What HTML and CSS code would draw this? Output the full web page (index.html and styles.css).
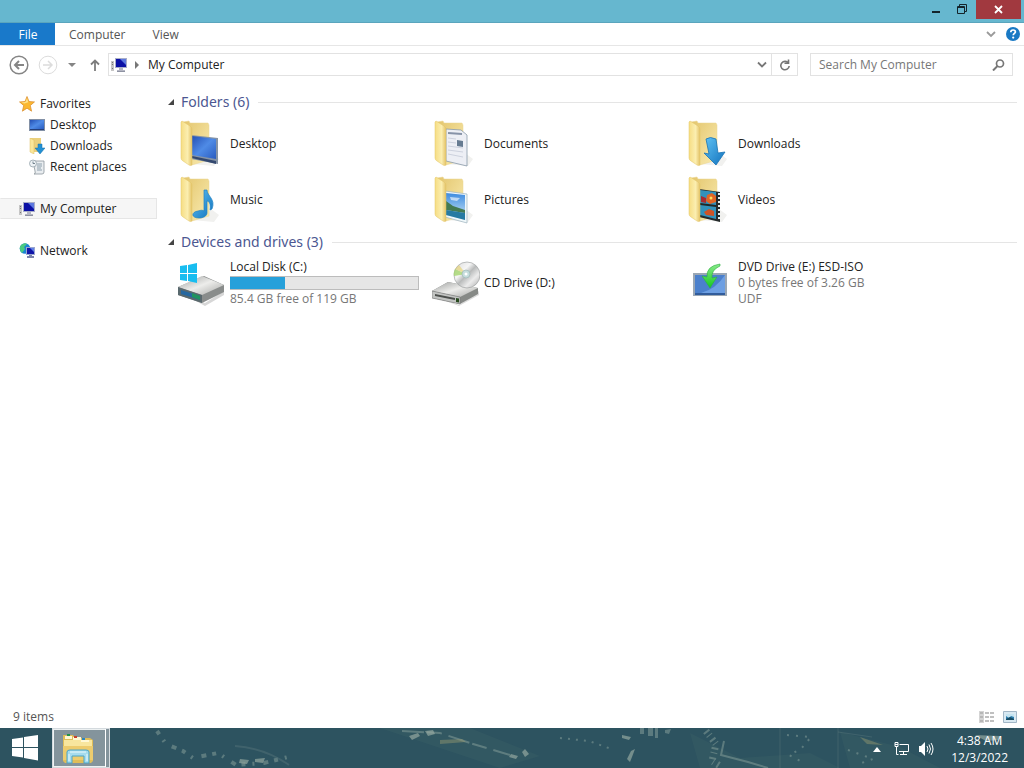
FILE: index.html
```html
<!DOCTYPE html>
<html lang="en">
<head>
<meta charset="utf-8">
<meta name="viewport" content="width=device-width, initial-scale=1">
<title>My Computer</title>
<link rel="stylesheet" href="styles.css">
</head>
<body>
<svg class="defs" width="0" height="0" aria-hidden="true">
  <defs>
    <linearGradient id="flap" x1="0" y1="0" x2="1" y2="0"><stop offset="0" stop-color="#f6dd83"/><stop offset=".6" stop-color="#fbeeb0"/><stop offset="1" stop-color="#e3c267"/></linearGradient>
    <linearGradient id="back" x1="0" y1="0" x2="1" y2="1"><stop offset="0" stop-color="#e3c56c"/><stop offset="1" stop-color="#faecb2"/></linearGradient>
    <linearGradient id="screen" x1="0" y1="0" x2="1" y2="1"><stop offset="0" stop-color="#2450b4"/><stop offset=".5" stop-color="#4f8be6"/><stop offset="1" stop-color="#2a5cc0"/></linearGradient>
    <linearGradient id="blue" x1="0" y1="0" x2="1" y2="1"><stop offset="0" stop-color="#5fc3f5"/><stop offset="1" stop-color="#1272bd"/></linearGradient>
    <linearGradient id="metal" x1="0" y1="0" x2="1" y2="1"><stop offset="0" stop-color="#9b9d9c"/><stop offset=".5" stop-color="#ededeb"/><stop offset="1" stop-color="#a5a6a4"/></linearGradient>
    <linearGradient id="green" x1="0" y1="0" x2="0" y2="1"><stop offset="0" stop-color="#8bea8b"/><stop offset="1" stop-color="#14c91f"/></linearGradient>
    <linearGradient id="sky" x1="0" y1="0" x2="0" y2="1"><stop offset="0" stop-color="#3d8be0"/><stop offset="1" stop-color="#d3ecf8"/></linearGradient>
    <linearGradient id="disc" x1="0" y1="0" x2="1" y2="1"><stop offset="0" stop-color="#d9d9d9"/><stop offset=".35" stop-color="#f5f5f5"/><stop offset=".5" stop-color="#b9bbbb"/><stop offset=".7" stop-color="#ececec"/><stop offset="1" stop-color="#a9a9a9"/></linearGradient>
  </defs>
  <symbol id="folder-back" viewBox="0 0 48 48">
    <path d="M14 44l22 2 5-7-8-6z" fill="#f1f1ef"/>
    <path d="M5 2l6-1 1 2 18 0 1 2v35l-17 5z" fill="url(#back)" stroke="#ead493" stroke-width=".5"/>
  </symbol>
  <symbol id="folder-flap" viewBox="0 0 48 48">
    <path d="M4 1l8 5q2 1 2 3v36q-1 1-3 0l-6-4q-2-1-2-3V2z" fill="url(#flap)" stroke="#e3c467" stroke-width=".5"/>
  </symbol>
  <symbol id="pc" viewBox="0 0 16 16">
    <path d="M0 4h3v10H0z" fill="#c6c6c6"/><path d="M1 5h1v1H1zM1 7h1v1H1zM1 11h1v1H1z" fill="#777"/>
    <path d="M4 1h12v10H4z" fill="#a9aec9"/><path d="M5 2h10v8H5z" fill="#0c11a5"/><path d="M9 2h6v6z" fill="#5d78df"/>
    <path d="M8 11h4v2h2v1H6v-1h2z" fill="#b4b6c3"/><path d="M6 14h8v1H6z" fill="#8e92a2"/>
  </symbol>
</svg>

<div class="window">
  <header class="titlebar">
    <button class="caption" aria-label="Minimize"><svg width="24" height="19"><path d="M8 11h8v2H8z" fill="#14242b"/></svg></button>
    <button class="caption" aria-label="Restore"><svg width="24" height="19" fill="none" stroke="#14242b"><path d="M7.500 6.500h7v7h-7z M7.500 7.500h7 M9.500 6V4.500h7v7H15"/></svg></button>
    <button class="caption close" aria-label="Close"><svg width="45" height="19"><path d="M19 6l7 7M26 6l-7 7" stroke="#fff" stroke-width="1.800"/></svg></button>
  </header>

  <nav class="ribbon" aria-label="Ribbon">
    <button class="tab file">File</button>
    <button class="tab">Computer</button>
    <button class="tab">View</button>
    <button class="plain expand" aria-label="Expand the ribbon"><svg width="10" height="8"><path d="M1 2l4 4 4-4" fill="none" stroke="#9a9a9a" stroke-width="1.800"/></svg></button>
    <button class="plain" aria-label="Help"><svg width="16" height="16"><circle cx="8" cy="8" r="7" fill="#1979c4"/><path d="M5.800 6.200q0-2.200 2.300-2.200t2.300 1.900c0 1.500-2.200 1.600-2.200 3.400" fill="none" stroke="#fff" stroke-width="1.700"/><circle cx="8.200" cy="11.600" r="1.100" fill="#fff"/></svg></button>
  </nav>

  <div class="navbar">
    <button class="plain" aria-label="Back"><svg width="20" height="20" fill="none" stroke="#858585"><circle cx="10" cy="10" r="8.800" stroke-width="1.500"/><path d="M15 10H6M10 6l-4 4 4 4" stroke-width="2"/></svg></button>
    <button class="plain forward" aria-label="Forward"><svg width="20" height="20" fill="none" stroke="#dcdcdc"><circle cx="10" cy="10" r="8.800"/><path d="M5 10h9M10 6l4 4-4 4" stroke-width="1.500"/></svg></button>
    <button class="plain recent" aria-label="Recent locations"><svg width="8" height="6"><path d="M0 1h8L4 5z" fill="#858585"/></svg></button>
    <button class="plain up" aria-label="Up"><svg width="10" height="12" fill="none" stroke="#7d7d7d" stroke-width="1.800"><path d="M5 12V2M1 5.500l4-4 4 4"/></svg></button>
    <div class="address">
      <svg width="16" height="16"><use href="#pc"/></svg>
      <svg width="5" height="8"><path d="M0 0l4 4-4 4z" fill="#777"/></svg>
      <a class="crumb" href="#">My Computer</a>
      <button class="plain" aria-label="Previous locations"><svg width="10" height="8"><path d="M1 1.500l4 4 4-4" fill="none" stroke="#777" stroke-width="1.800"/></svg></button>
      <button class="plain refresh" aria-label="Refresh"><svg width="12" height="12" fill="none" stroke="#777" stroke-width="1.600"><path d="M9.500 4.200A4.200 4.200 0 1 0 10.200 7"/><path d="M5.500 4.300h4V.5"/></svg></button>
    </div>
    <form class="search">
      <input type="search" placeholder="Search My Computer" aria-label="Search My Computer">
      <button class="plain" aria-label="Search"><svg width="13" height="12" fill="none" stroke="#777"><circle cx="8" cy="4.500" r="3.500" stroke-width="1.700"/><path d="M5.500 7L1 11.500" stroke-width="2"/></svg></button>
    </form>
  </div>

  <div class="body">
    <nav class="sidebar" aria-label="Navigation pane">
      <div class="group">
        <a href="#"><svg width="16" height="16"><path d="M8 .5l2 5 5.500.4-4.200 3.600 1.300 5.700L8 12.200l-4.600 3 1.300-5.700L.5 5.900 6 5.500z" fill="#fbb731" stroke="#d98a2b" stroke-width=".7"/><path d="M8 2l1.300 4.300-4 1.200-3-1L6.500 6z" fill="#fde38d"/></svg>Favorites</a>
        <a class="child" href="#"><svg width="16" height="16"><path d="M0 2h16v12H0z" fill="#8290a6"/><path d="M1 3h14v9H1z" fill="url(#screen)"/><path d="M1 12h14v1H1z" fill="#243f7c"/></svg>Desktop</a>
        <a class="child" href="#"><svg width="16" height="16"><path d="M1 0h11v14H3z" fill="#ead07d"/><path d="M1 0l4 2v14l-4-2z" fill="#fae699" stroke="#ddbd62" stroke-width=".5"/><path d="M9 6h4v4h3l-5 6-5-6h3z" fill="#2390d3" stroke="#1870ab" stroke-width=".5"/></svg>Downloads</a>
        <a class="child" href="#"><svg width="16" height="16"><path d="M4 2h11v11q0 2-2 2H5q2 0 1-3z" fill="#e9edf0" stroke="#8c969c" stroke-width=".8"/><path d="M8 5h5M8 7h5M8 9h4M8 11h5" stroke="#8da0ad"/><circle cx="4" cy="4.500" r="3.500" fill="#edf2f5" stroke="#94a2ab" stroke-width=".8"/><path d="M4 2.500v2h2" fill="none" stroke="#596c78" stroke-width=".8"/></svg>Recent places</a>
      </div>
      <div class="group">
        <a class="current" href="#" aria-current="page"><svg width="16" height="16"><use href="#pc"/></svg>My Computer</a>
      </div>
      <div class="group">
        <a href="#"><svg width="16" height="16"><circle cx="6" cy="5.500" r="5.300" fill="#1b83d1"/><path d="M2 2q4-3 6-1L5 4l1 2-3 4Q0 7 1 4z" fill="#4acb80"/><path d="M7 4h9v8H7z" fill="#9ba6d0"/><path d="M8 5h7v6H8z" fill="#1015a8"/><path d="M11 5h4v4z" fill="#6180e5"/><path d="M10 12h3v1h2v2H8v-2h2z" fill="#7b84ab"/></svg>Network</a>
      </div>
    </nav>

    <main class="content">
      <section>
        <h2><svg width="7" height="7"><path d="M6 0v6H0z" fill="#454545"/></svg>Folders (6)</h2>
        <div class="items">
          <a class="item" href="#"><svg width="48" height="48"><use href="#folder-back"/><path d="M13 15l27 3v26l-27-5z" fill="#8593a5"/><path d="M14 16l24 3v20l-24-4z" fill="url(#screen)"/><path d="M14 36l24 5v3l-24-6z" fill="#33486f"/><use href="#folder-flap"/></svg><span>Desktop</span></a>
          <a class="item" href="#"><svg width="48" height="48"><use href="#folder-back"/><path d="M14 9l15 1 6 5v31l-21-5z" fill="#edeff5" stroke="#8999a8" stroke-width=".8"/><path d="M16 13l14 1" stroke="#8793a8" stroke-width="2"/><path d="M16 18l8 1M16 22l8 1M16 26l15 2M16 30l15 2M16 34l15 3" stroke="#cdd2de"/><path d="M25 20l6 1v6l-6-1z" fill="#667b91"/><use href="#folder-flap"/></svg><span>Documents</span></a>
          <a class="item" href="#"><svg width="48" height="48"><use href="#folder-back"/><path d="M20 19q4-3 10 0l2 14 7-1-9 13-12-12 5 1z" fill="url(#blue)" stroke="#1973b5" stroke-width=".8"/><use href="#folder-flap"/></svg><span>Downloads</span></a>
          <a class="item" href="#"><svg width="48" height="48"><use href="#folder-back"/><use href="#folder-flap"/><path d="M26 14h3c0 6 9 9 5 19l-2 1c1-6-1-9-3-9v12c0 3-4 5-8 5-8 0-8-6-1-7 3-1 5-1 6 0z" fill="url(#blue)" stroke="#2082c5" stroke-width=".7"/></svg><span>Music</span></a>
          <a class="item" href="#"><svg width="48" height="48"><use href="#folder-back"/><path d="M13 15l22 3v29l-22-6z" fill="#eff7fa" stroke="#9cb2bd" stroke-width=".7"/><path d="M14 17l19 2v25l-19-5z" fill="url(#sky)"/><path d="M14 25l7 5 12 4v3l-19-3z" fill="#447a52"/><path d="M14 34l19 3v7l-19-5z" fill="#267aa2"/><path d="M18 21l10 1-3 3-6-1z" fill="#fff" opacity=".6"/><use href="#folder-flap"/></svg><span>Pictures</span></a>
          <a class="item" href="#"><svg width="48" height="48"><use href="#folder-back"/><path d="M13 13l21 3v30l-21-5z" fill="#252a2b"/><path d="M14 14l16 2v27l-16-4z" fill="#3291bb"/><path d="M14 27l16 2v2l-16-2z" fill="#202828"/><path d="M21 19l5-2 4 3v6l-6 2-4-3z" fill="#e16524"/><path d="M15 20l5 2v5l-5-1z" fill="#a82b30"/><path d="M18 36l5-3 5 2v5l-8-1z" fill="#cf5326"/><circle cx="25" cy="22" r="1.500" fill="#ffe05b"/><path d="M33 17v28" stroke="#e5eef0" stroke-width="2" stroke-dasharray="2 2"/><use href="#folder-flap"/></svg><span>Videos</span></a>
        </div>
      </section>

      <section>
        <h2><svg width="7" height="7"><path d="M6 0v6H0z" fill="#454545"/></svg>Devices and drives (3)</h2>
        <div class="items">
          <a class="item" href="#"><svg width="48" height="48"><path d="M3 34l24 10 19-12v4L27 47z" fill="#d7d7d7"/><path d="M0 28l26-11 20 9v7L24 44 0 36z" fill="#898c8b"/><path d="M0 28l24-11 22 9-22 10z" fill="url(#metal)"/><path d="M0 28l24 8v8L0 36z" fill="#59696e"/><path d="M3 31l19 6v4L3 35z" fill="#2668a0"/><path d="M14 34l8 3v4l-8-3z" fill="#20945e"/><path d="M2 7l7-1v8H2zM10 6l9-2v10h-9zM2 15h7v7l-7-1zM10 15h9v9l-9-2z" fill="#18bdf0"/></svg>
            <span class="details"><span>Local Disk (C:)</span><span class="meter" role="meter" aria-label="Used space" aria-valuemin="0" aria-valuemax="119" aria-valuenow="34"><span class="used" style="width:29%"></span></span><span class="muted">85.4 GB free of 119 GB</span></span></a>
          <a class="item" href="#"><svg width="48" height="48"><path d="M6 39l21 7 20-14v4L27 47z" fill="#dcdcdc"/><path d="M0 32l16-9 30 6v6L28 45 0 39z" fill="#868986"/><path d="M0 32l16-9 30 6-18 9z" fill="url(#metal)"/><path d="M0 32l28 6v7L0 39z" fill="#c2c4c2" stroke="#777" stroke-width=".6"/><path d="M3 35l20 4v2L3 37z" fill="#4c4f4c"/><path d="M24 39l3 .5v4l-3-.5z" fill="#294b20"/><circle cx="35" cy="16" r="13" fill="url(#disc)" stroke="#a1a3a3" stroke-width=".7"/><path d="M34 15L23 10q-2 4-1 7z" fill="#a5d66e" opacity=".8"/><path d="M34 15l-7-9-4 4z" fill="#e5cf65" opacity=".6"/><circle cx="34" cy="15" r="4" fill="#c6dddd" stroke="#98b2b2" stroke-width=".6"/><circle cx="34" cy="15" r="1.500" fill="#fff"/></svg><span>CD Drive (D:)</span></a>
          <a class="item" href="#"><svg width="48" height="48"><path d="M7 14h34v23H7z" fill="#9ba7b4"/><path d="M9 16h30v18H9z" fill="#4b80cc"/><path d="M39 16v18H15q15-4 24-18z" fill="#6d9fe3"/><path d="M9 34h30v2H9z" fill="#315c9b"/><path d="M34 5q-14 2-13 13l-5-1 8 12 7-11-5 1q-1-8 8-12z" fill="url(#green)" stroke="#2cae42" stroke-width=".6"/></svg>
            <span class="details"><span>DVD Drive (E:) ESD-ISO</span><span class="muted">0 bytes free of 3.26 GB</span><span class="muted">UDF</span></span></a>
        </div>
      </section>
    </main>
  </div>

  <footer class="status">
    <span class="count">9 items</span>
    <button class="plain" aria-label="Details view"><svg width="16" height="14"><path d="M0 1h5v12H0z" fill="#d4d4d4"/><path d="M1 3h3M1 7h3M1 11h3" stroke="#999"/><path d="M6 3h4M11 3h4M6 7h4M11 7h4M6 11h4M11 11h4" stroke="#818181"/></svg></button>
    <button class="plain" aria-label="Large icons view"><svg width="14" height="14"><path d="M.5 1.500h13v11H.5z" fill="#d9e9f2" stroke="#a2b7c7"/><path d="M3 4h8v6H3z" fill="#2e7faf"/><path d="M3 4h8v3L8 6 6 8 3 6z" fill="#c4e4f1"/><path d="M3 9l4-2 4 2v1H3z" fill="#174d65"/></svg></button>
  </footer>
</div>

<footer class="taskbar">
  <svg class="wallpaper" viewBox="0 0 1024 40" preserveAspectRatio="xMidYMid slice" aria-hidden="true">
    <path d="M0 0h1024v40H0z" fill="#2d5360"/>
    <path d="M380 0h90l70 28-40 12-60-20zM690 5l50 25 70-5 30 15H700zM840 4l60 15 40 21h-90z" fill="#3d6067" opacity=".35"/>
    <g fill="none" stroke="#8ba39d" opacity=".5"><path d="M157 3l9 13 17 7 10 7 25-5 18 12 28-2 24-6" stroke-width="4" stroke-dasharray="4 7 2 9 5 6"/><path d="M235 18q30 2 54 19" stroke-width="2" opacity=".4"/><path d="M402 3l38 2 30 10 40 12" stroke-width="2" stroke-dasharray="22 3 15 7"/><path d="M560 10l29 3 25 9" stroke-width="2" stroke-dasharray="2 6"/><path d="M706 3l10 13-4 17 8 5" stroke-width="7" stroke-dasharray="2 3 1 4"/><path d="M724 13l-3 14 27 7 20 6" stroke-width="2"/><path d="M780 0v40M838 0v40M838 4l34 5" opacity=".4"/><path d="M787 7l24 2-10 12-12 6 15 8M848 22l25 9-17 6" stroke-width="2" stroke-dasharray="2 7"/></g>
    <path d="M409 8l9-3 2 3-8 4zM425 3l8-1 2 4-7 2zM622 7l9 2-2 3-7-2zM627 31l4-8 4-2-3 8-2 5zM975 7l25 1-2 4-12 1zM525 21l4 5-4 3-3-5zM511 26l7 2-2 3-7-2zM240 31l9 1-2 4-8-1zM255 31l10-1-2 5-8-1z" fill="#9baea5" opacity=".65"/>
    <path d="M640 0h4v6h-4zM648 0h5v8h-5zM655 0h3v10h-3zM665 2l6-1-2 5-4-1z" fill="#8ba39d" opacity=".5"/>
    <path d="M860 9l23 8-16-1zM440 12l22-1 4 3-26 2z" fill="#999b72" opacity=".45"/>
  </svg>
  <button class="start" aria-label="Start"><svg width="26" height="26"><path d="M0 4l11-1.500V12H0zM12 2l14-2v12H12zM0 13h11v9.500L0 21zM12 13h14v12.500L12 23z" fill="#fff"/></svg></button>
  <button class="app" aria-label="File Explorer"><svg width="32" height="32"><path d="M1 3h10l2 3h15l3 2v21l-2 2H3l-2-2z" fill="#dfbd59"/><path d="M2 8h28v19H2z" fill="#f8e69e"/><path d="M3 4h7v3H3zM11 5h8v3h-8zM19 8h8v2h-8z" fill="#fff8d4"/><path d="M5 2h3v2H5z" fill="#219148"/><path d="M12 4h3v2h-3z" fill="#c7402e"/><path d="M20 6h3v2h-3z" fill="#2a86c3"/><path d="M1 14h30v14H1z" fill="#edcc6e"/><path d="M5 31V20q0-2 3-2h16q3 0 3 2v11h-5v-7H10v7z" fill="#a6dcee" stroke="#4ba4c6"/><path d="M8 20h16M7 22v7M25 22v7" stroke="#e9f9fc"/></svg></button>
  <div class="tray">
    <button class="plain hidden-icons" aria-label="Show hidden icons"><svg width="8" height="5"><path d="M4 0l4 5H0z" fill="#fff"/></svg></button>
    <button class="plain" aria-label="Network"><svg width="16" height="16" fill="none" stroke="#fff"><path d="M5.500 3.500h9v7H5M9.500 11v2M6 13.500h7M2.500 6v7.500h2M1 1.500h3v4H1z"/><path d="M1 3.500h3"/></svg></button>
    <button class="plain" aria-label="Volume"><svg width="16" height="16"><path d="M1 5h2l4-4v14l-4-4H1z" fill="#fff"/><path d="M9 5q2 3 0 6M11 3.500q3 4.500 0 9M13 2q4 6 0 12" fill="none" stroke="#fff"/></svg></button>
    <button class="plain clock"><time>4:38 AM</time><time>12/3/2022</time></button>
  </div>
</footer>
</body>
</html>
```
FILE: styles.css
```css
* { box-sizing: border-box; }

body {
  margin: 0;
  height: 100vh;
  display: flex;
  flex-direction: column;
  background: #fff;
  color: #222;
  font: 12px/16px "Open Sans", "Noto Sans", sans-serif;
}

svg { display: block; flex: none; }
.defs { position: absolute; }
button, input { font: inherit; color: inherit; }
button { border: 0; padding: 0; background: none; }
a { color: inherit; text-decoration: none; }

.plain { display: flex; align-items: center; justify-content: center; }

.window {
  flex: 1;
  min-height: 0;
  display: flex;
  flex-direction: column;
}

.titlebar {
  height: 23px;
  flex: none;
  display: flex;
  justify-content: flex-end;
  align-items: flex-start;
  gap: 2px;
  padding-right: 3px;
  background: #66b7cf;
  border-bottom: 1px solid #5aa5bd;
}
.close { background: #a1393f; }

.ribbon {
  height: 23px;
  flex: none;
  display: flex;
  align-items: stretch;
  padding-right: 3px;
  border-bottom: 1px solid #e6e6e6;
  color: #555;
}
.tab { padding: 2px 13px 0 14px; }
.file { width: 55px; background: #1979ca; color: #fff; }
.expand { margin-left: auto; margin-right: 9px; }

.navbar {
  flex: none;
  display: flex;
  align-items: center;
  padding: 7px 11px 7px 9px;
}
.forward { margin-left: 9px; }
.recent { margin-left: 10px; }
.up { margin: 0 8px 0 14px; }
.address, .search {
  height: 23px;
  display: flex;
  align-items: center;
  border: 1px solid #e2e2e2;
}
.address { flex: 1; gap: 8px; padding-left: 2px; }
.crumb { flex: 1; }
.refresh {
  align-self: stretch;
  width: 26px;
  margin-left: -4px;
  border-left: 1px solid #e2e2e2;
}
.search { width: 203px; margin-left: 12px; padding: 0 7px 0 8px; }
.search input {
  flex: 1;
  min-width: 0;
  padding: 0;
  border: 0;
  outline: 0;
  background: none;
}
.search input::placeholder { color: #777; opacity: 1; }

.body {
  flex: 1;
  min-height: 0;
  display: flex;
  padding-top: 9px;
}
.sidebar {
  width: 157px;
  flex: none;
  display: flex;
  flex-direction: column;
  gap: 21px;
  padding-top: 1px;
}
.sidebar a {
  height: 21px;
  display: flex;
  align-items: center;
  gap: 5px;
  padding-left: 18px;
  border: 1px solid transparent;
}
.sidebar .child { padding-left: 28px; }
.sidebar .current { background: #f6f6f6; border-color: #e6e6e6; border-left-color: #f6f6f6; }

.content { flex: 1; min-width: 0; padding: 0 7px 0 11px; }
h2 {
  height: 20px;
  margin: 0 0 4px;
  display: flex;
  align-items: center;
  gap: 6px;
  font-family: "Noto Sans", "Open Sans", sans-serif;
  font-size: 14px;
  font-weight: 400;
  color: #4c5791;
}
h2::after { content: ""; flex: 1; height: 1px; margin-left: 3px; background: #e5e5e5; }
section + section { margin-top: 4px; }
section + section h2 { margin-bottom: 3px; }
.items { display: grid; grid-template-columns: repeat(3, minmax(0, 254px)); padding-left: 10px; }
.item { height: 56px; display: flex; align-items: center; gap: 4px; padding-right: 13px; }
.details { flex: 1; display: flex; flex-direction: column; }
.muted { color: #777; }
.meter { height: 14px; margin: 1px 0; background: #e6e6e6; border: 1px solid #bcbcbc; border-left: 0; }
.used { display: block; height: 100%; background: #26a0da; }

.status {
  height: 23px;
  flex: none;
  display: flex;
  align-items: center;
  gap: 8px;
  padding: 1px 7px 0 13px;
  color: #555;
}
.count { flex: 1; }

.taskbar {
  position: relative;
  height: 40px;
  flex: none;
  display: flex;
  align-items: stretch;
  background: #2d5360;
  color: #fff;
  overflow: hidden;
}
.taskbar > * { z-index: 1; }
.taskbar .wallpaper { position: absolute; inset: 0; width: 100%; height: 100%; z-index: 0; }
.start { width: 52px; padding-right: 2px; display: flex; align-items: center; justify-content: center; }
.app {
  width: 58px;
  padding: 3px 9px;
  border: 1px solid #d4dade;
  background: #84949c;
  box-shadow: inset -3px 0 #84949c, inset -4px 0 #fff, inset 0 0 0 1px #edf1f2;
}
.tray { margin-left: auto; display: flex; align-items: center; padding: 2px 16px 0 0; gap: 8px; }
.hidden-icons { margin-right: 5px; }
.clock { flex-direction: column; line-height: 17px; margin-left: 9px; }
```
